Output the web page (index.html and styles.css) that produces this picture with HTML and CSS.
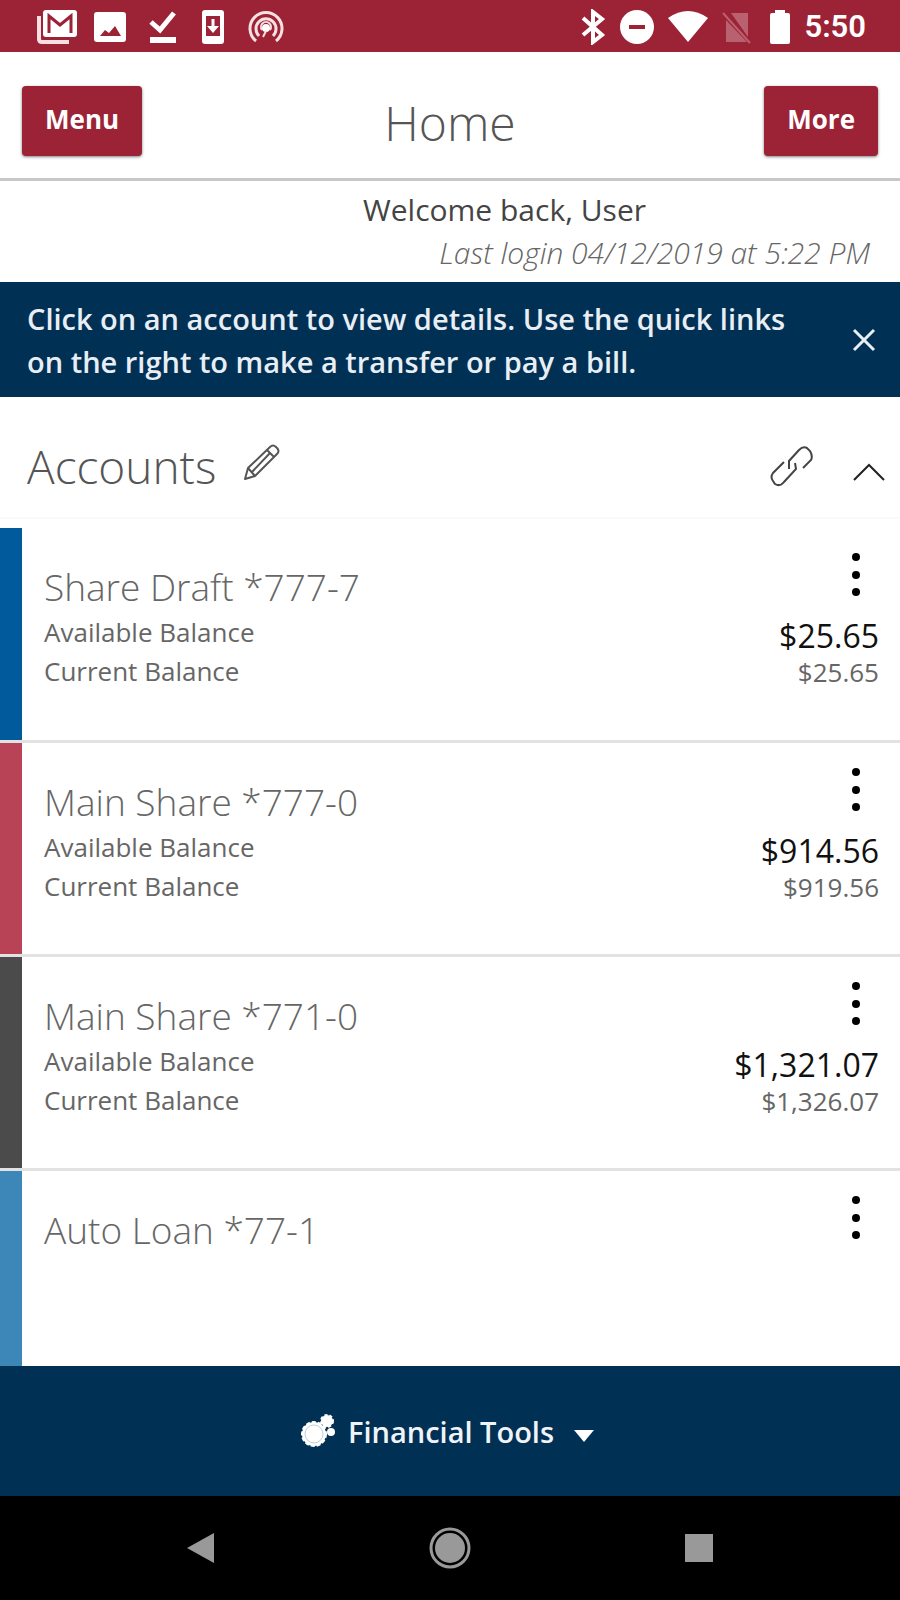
FILE: index.html
```html
<!DOCTYPE html>
<html lang="en">
<head>
<meta charset="utf-8">
<meta name="viewport" content="width=device-width, initial-scale=1">
<title>Home</title>
<link rel="stylesheet" href="styles.css">
</head>
<body>
<div class="status">
  <div class="status-left">
    <svg width="42" height="36" viewBox="0 0 42 36" aria-hidden="true"><path d="M3 7v23q0 3 3 3h27" fill="none" stroke="#f7dfe2" stroke-width="4"/><rect x="7" y="1" width="34" height="27" rx="3" fill="#fff"/><path d="M13 24V7l11 9 11-9v17" fill="none" stroke="#9b2335" stroke-width="3"/></svg>
    <svg width="32" height="36" viewBox="0 0 32 36" aria-hidden="true"><rect x="0" y="3" width="32" height="30" rx="3" fill="#fff"/><path d="M6 27l5-6 4 3 6-7 6 10z" fill="#9b2335"/></svg>
    <svg width="30" height="36" viewBox="0 0 30 36" aria-hidden="true"><path d="M3 13l9 8L26 4" fill="none" stroke="#fff" stroke-width="5"/><path d="M2 31h26" stroke="#fff" stroke-width="6"/></svg>
    <svg width="26" height="36" viewBox="0 0 26 36" aria-hidden="true"><rect x="2" y="1" width="22" height="34" rx="3" fill="#fff"/><path d="M6 7h14v20H6z" fill="#9b2335"/><path d="M13 10v8" stroke="#fff" stroke-width="3"/><path d="M7 17h12l-6 7z" fill="#fff"/></svg>
    <svg width="36" height="36" viewBox="0 0 36 36" fill="none" stroke="#f7dfe2" stroke-width="3" aria-hidden="true"><path d="M8 32a16 16 0 1 1 20 0"/><path d="M11 27a10 10 0 1 1 14 0"/><path d="M14 21a5 5 0 1 1 8 0" stroke-width="2"/><circle cx="18" cy="19" r="4" fill="#fff" stroke="none"/><path d="M18 22l-3 6" stroke-width="2"/></svg>
  </div>
  <div class="status-right">
    <svg width="26" height="36" viewBox="0 0 26 36" aria-hidden="true"><path d="M3 9l19 17-9 7V3l9 7L3 26" fill="none" stroke="#fff" stroke-width="4"/></svg>
    <svg width="34" height="36" viewBox="0 0 34 36" aria-hidden="true"><circle cx="17" cy="18" r="17" fill="#fff"/><path d="M9 18h16" stroke="#9b2335" stroke-width="4"/></svg>
    <svg width="40" height="36" viewBox="0 0 40 36" aria-hidden="true"><path d="M0 9q20-14 40 0L20 33z" fill="#fff"/></svg>
    <svg width="30" height="36" viewBox="0 0 30 36" aria-hidden="true"><path d="M4 11v22h21zM9 4h17v24z" fill="#b9616e"/><path d="M1 4l27 30" stroke="#b9616e" stroke-width="2"/></svg>
    <svg class="battery" width="20" height="36" viewBox="0 0 20 36" aria-hidden="true"><path d="M5 1h10v3h3q2 0 2 2v27q0 2-2 2H2q-2 0-2-2V6q0-2 2-2h3z" fill="#fff"/></svg>
    <span class="clock">5:50</span>
  </div>
</div>

<header class="header">
  <button class="btn" type="button">Menu</button>
  <h1 class="title">Home</h1>
  <button class="btn" type="button">More</button>
</header>

<section class="welcome">
  <p class="greeting">Welcome back, User</p>
  <p class="last-login">Last login 04/12/2019 at 5:22 PM</p>
</section>

<section class="banner">
  <p class="banner-text">Click on an account to view details. Use the quick links on the right to make a transfer or pay a bill.</p>
  <button class="icon-btn" type="button" aria-label="Dismiss"><svg width="24" height="24" viewBox="0 0 24 24" aria-hidden="true"><path d="M2 2l20 20M22 2L2 22" stroke="#e8eef4" stroke-width="3"/></svg></button>
</section>

<section class="accounts-head">
  <h2 class="accounts-title">Accounts</h2>
  <button class="icon-btn edit" type="button" aria-label="Edit accounts"><svg width="36" height="36" viewBox="0 0 36 36" fill="none" stroke="#555" stroke-width="2" stroke-linejoin="round" aria-hidden="true"><path d="M1 35l3-11L26 3q3-3 6 0l1 1q3 3 0 6L11 32zM4 24l7 8M23 6l7 7M26 9L8 28"/></svg></button>
  <button class="icon-btn" type="button" aria-label="Link account"><svg width="44" height="44" viewBox="0 0 44 44" fill="none" stroke="#444" stroke-width="2" aria-hidden="true"><path d="M19 25v-8L29 6q4-4 8-2l3 3q3 5 1 9l-8 8"/><path d="M25 19l1 6L14 38q-4 5-9 2l-2-3q-3-4 0-8l11-11"/></svg></button>
  <button class="icon-btn collapse" type="button" aria-label="Collapse accounts"><svg width="34" height="20" viewBox="0 0 34 20" aria-hidden="true"><path d="M2 18L17 3l15 15" fill="none" stroke="#222" stroke-width="2"/></svg></button>
</section>

<main class="accounts">
  <article class="account blue">
    <div class="info"><h3 class="name">Share Draft *777-7</h3><p class="label">Available Balance</p><p class="label">Current Balance</p></div>
    <div class="side"><button class="icon-btn" type="button" aria-label="Share Draft options"><svg width="14" height="54" viewBox="0 0 14 54" aria-hidden="true"><circle cx="7" cy="9" r="4"/><circle cx="7" cy="27" r="4"/><circle cx="7" cy="44" r="4"/></svg></button><p class="available">$25.65</p><p class="current">$25.65</p></div>
  </article>
  <article class="account red">
    <div class="info"><h3 class="name">Main Share *777-0</h3><p class="label">Available Balance</p><p class="label">Current Balance</p></div>
    <div class="side"><button class="icon-btn" type="button" aria-label="Main Share 777-0 options"><svg width="14" height="54" viewBox="0 0 14 54" aria-hidden="true"><circle cx="7" cy="9" r="4"/><circle cx="7" cy="27" r="4"/><circle cx="7" cy="44" r="4"/></svg></button><p class="available">$914.56</p><p class="current">$919.56</p></div>
  </article>
  <article class="account gray">
    <div class="info"><h3 class="name">Main Share *771-0</h3><p class="label">Available Balance</p><p class="label">Current Balance</p></div>
    <div class="side"><button class="icon-btn" type="button" aria-label="Main Share 771-0 options"><svg width="14" height="54" viewBox="0 0 14 54" aria-hidden="true"><circle cx="7" cy="9" r="4"/><circle cx="7" cy="27" r="4"/><circle cx="7" cy="44" r="4"/></svg></button><p class="available">$1,321.07</p><p class="current">$1,326.07</p></div>
  </article>
  <article class="account sky">
    <div class="info"><h3 class="name">Auto Loan *77-1</h3></div>
    <div class="side"><button class="icon-btn" type="button" aria-label="Auto Loan options"><svg width="14" height="54" viewBox="0 0 14 54" aria-hidden="true"><circle cx="7" cy="9" r="4"/><circle cx="7" cy="27" r="4"/><circle cx="7" cy="44" r="4"/></svg></button></div>
  </article>
</main>

<button class="tools" type="button">
  <svg width="36" height="36" viewBox="0 0 36 36" fill="#fff" aria-hidden="true"><circle cx="14" cy="21" r="12"/><circle cx="14" cy="21" r="12" fill="none" stroke="#fff" stroke-width="2" stroke-dasharray="4 2"/><circle cx="14" cy="21" r="9" fill="none" stroke="#c3ced8" stroke-width="1"/><circle cx="27" cy="8" r="6"/><circle cx="27" cy="8" r="6" fill="none" stroke="#fff" stroke-width="2" stroke-dasharray="3 2"/><circle cx="31" cy="19" r="4"/></svg>
  <span>Financial Tools</span>
  <svg class="caret" width="20" height="14" viewBox="0 0 20 14" aria-hidden="true"><path d="M0 1h20L10 13z" fill="#fff"/></svg>
</button>

<nav class="system-nav" aria-label="System">
  <button class="icon-btn" type="button" aria-label="Back"><svg width="44" height="44" viewBox="0 0 44 44" aria-hidden="true"><path d="M35 7v30L8 22z" fill="#999"/></svg></button>
  <button class="icon-btn" type="button" aria-label="Home"><svg width="44" height="44" viewBox="0 0 44 44" aria-hidden="true"><circle cx="22" cy="22" r="19" fill="none" stroke="#999" stroke-width="3"/><circle cx="22" cy="22" r="15" fill="#999"/></svg></button>
  <button class="icon-btn" type="button" aria-label="Recent apps"><svg width="44" height="44" viewBox="0 0 44 44" aria-hidden="true"><path d="M8 8h28v28H8z" fill="#999"/></svg></button>
</nav>
</body>
</html>
```
FILE: styles.css
```css
* { box-sizing: border-box; margin: 0; padding: 0; }
body {
  min-height: 100vh;
  display: flex;
  flex-direction: column;
  background: #fff;
  color: #444;
  font-family: "Open Sans", "Noto Sans", sans-serif;
}
svg { display: block; flex: none; }
button { border: 0; font: inherit; cursor: pointer; }
.icon-btn { background: none; display: flex; flex: none; }

.status {
  height: 52px;
  padding: 2px 34px 0 36px;
  display: flex;
  align-items: center;
  justify-content: space-between;
  background: #9b2335;
}
.status-left { display: flex; align-items: center; gap: 22px; }
.status-left svg:first-child { margin-right: -6px; }
.status-right { display: flex; align-items: center; gap: 14px; }
.battery { margin-left: 4px; }
.clock { color: #fff; font: 600 31px/36px Roboto, sans-serif; }

.header {
  height: 129px;
  padding: 12px 22px 0;
  display: grid;
  grid-template-columns: 1fr auto 1fr;
  align-items: center;
  border-bottom: 3px solid #c8c8c8;
}
.btn {
  height: 70px;
  padding: 0 23px 4px;
  border-radius: 4px;
  background: #9b2335;
  box-shadow: 0 1px 3px rgba(0, 0, 0, 0.5);
  color: #fff;
  font-size: 26px;
  font-weight: 700;
  justify-self: start;
}
.btn:last-child { justify-self: end; }
.title { font-size: 48px; font-weight: 300; line-height: 56px; padding-top: 4px; color: #555; }

.welcome { padding: 7px 30px 7px; text-align: right; }
.greeting { font-size: 30px; line-height: 43px; padding-right: 224px; }
.last-login { font-size: 30px; line-height: 44px; font-weight: 300; font-style: italic; color: #666; }

.banner {
  padding: 15px 24px 14px 27px;
  display: flex;
  align-items: center;
  justify-content: space-between;
  gap: 32px;
  background: #003054;
  color: #e8eef4;
}
.banner-text { font-size: 29px; line-height: 43px; font-weight: 600; }

.accounts-head {
  height: 122px;
  padding: 18px 14px 0 27px;
  display: flex;
  align-items: center;
  border-bottom: 2px solid #fafafa;
}
.accounts-title { font-size: 46px; font-weight: 300; color: #555; }
.edit { margin: 0 auto 8px 28px; }
.collapse { margin: 12px 0 0 38px; }

.accounts { flex: 1; display: flex; flex-direction: column; padding-top: 9px; }
.account {
  min-height: 214px;
  display: flex;
  justify-content: space-between;
  border-bottom: 3px solid #e2e2e2;
}
.account:first-child { min-height: 215px; }
.account:last-child { flex: 1; min-height: 160px; border-bottom: 0; }
.account::before { content: ""; width: 22px; background: var(--swatch); }
.blue { --swatch: #005a9c; }
.red { --swatch: #b84256; }
.gray { --swatch: #4b4b4b; }
.sky { --swatch: #3d86b8; }
.info { flex: 1; padding: 33px 0 0 22px; }
.name { font-size: 37px; line-height: 52px; font-weight: 300; color: #666; }
.label { font-size: 26px; line-height: 39px; color: #666; }
.side { padding: 20px 21px 0 0; display: flex; flex-direction: column; align-items: flex-end; }
.side .icon-btn { margin: 0 16px 14px 0; }
.available { font-size: 32px; line-height: 40px; color: #111; }
.current { font-size: 26px; line-height: 32px; color: #666; }

.tools {
  height: 130px;
  display: flex;
  align-items: center;
  justify-content: center;
  gap: 12px;
  background: #003054;
  color: #f0f4f8;
  font-size: 29px;
  font-weight: 600;
  padding-right: 6px;
}
.caret { margin: 10px 0 0 8px; }

.system-nav {
  height: 104px;
  padding: 0 179px;
  display: flex;
  align-items: center;
  justify-content: space-between;
  background: #000;
}
```
